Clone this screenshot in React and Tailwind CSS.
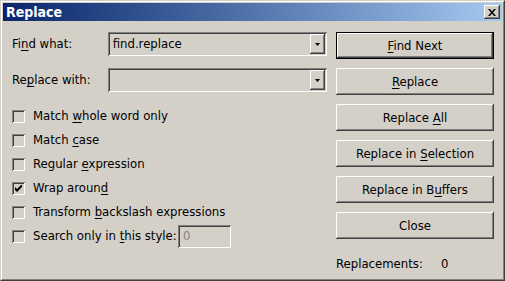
import React from 'react'

const font = { fontFamily: '"DejaVu Sans Condensed", "DejaVu Sans", sans-serif' }

const raised =
  'bg-[#d4d0c8] shadow-[inset_-1px_-1px_#404040,inset_1px_1px_#ffffff,inset_-2px_-2px_#808080,inset_2px_2px_#d4d0c8]'
const sunken =
  'shadow-[inset_1px_1px_#808080,inset_-1px_-1px_#ffffff,inset_2px_2px_#404040,inset_-2px_-2px_#d4d0c8]'

function Key({ text, at, className = '' }) {
  // underline the mnemonic letter
  return (
    <span className={className}>
      {text.slice(0, at)}
      <span className="underline underline-offset-2">{text[at]}</span>
      {text.slice(at + 1)}
    </span>
  )
}

function Combo({ value }) {
  return (
    <div className={`flex h-[24px] w-[220px] items-center justify-between pl-[5px] pr-[2px] ${sunken}`}>
      <span>{value}</span>
      <div className={`flex h-[20px] w-[15px] items-center justify-center ${raised}`}>
        <svg width="5" height="3" viewBox="0 0 5 3">
          <path d="M0 0h5L2.5 3z" fill="#000" />
        </svg>
      </div>
    </div>
  )
}

function Check({ checked, children }) {
  return (
    <div className="flex h-[24px] items-center gap-[8px]">
      <div className={`flex h-[13px] w-[13px] items-center justify-center ${sunken}`}>
        {checked && (
          <svg width="7" height="7" viewBox="0 0 7 7">
            <path d="M0 2v3l2 2 5-5V-1L2 4z" fill="#000" />
          </svg>
        )}
      </div>
      {children}
    </div>
  )
}

function Button({ children, primary }) {
  if (primary) {
    return (
      <div className="h-[27px] w-[158px] border border-black">
        <div className={`flex h-full w-full items-center justify-center ${raised}`}>{children}</div>
      </div>
    )
  }
  return (
    <div className={`flex h-[27px] w-[158px] items-center justify-center ${raised}`}>{children}</div>
  )
}

export default function App() {
  return (
    <div
      className="h-[281px] w-[505px] border border-t-[#d4d0c8] border-l-[#d4d0c8] border-r-[#404040] border-b-[#404040] bg-[#d4d0c8] text-[13px] text-black"
      style={font}
    >
      <div className="flex h-full flex-col border border-t-white border-l-white border-r-[#808080] border-b-[#808080] p-px">
        <div className="flex h-[18px] items-center justify-between bg-gradient-to-r from-[#0a246a] to-[#a6caf0] pl-[3px] pr-[2px]">
          <span className="text-[14px] font-bold text-white">Replace</span>
          <div className={`flex h-[14px] w-[16px] items-center justify-center ${raised}`}>
            <svg width="8" height="7" viewBox="0 0 8 7">
              <path d="M0 0h2l2 2.5L6 0h2L5 3.5 8 7H6L4 4.5 2 7H0l3-3.5z" fill="#000" />
            </svg>
          </div>
        </div>

        <div className="flex flex-1 gap-[9px] pl-[9px] pr-[8px] pt-[11px]">
          <div className="flex w-[315px] flex-col">
            <div className="flex h-[24px] items-center">
              <span className="w-[96px]">
                Fi<span className="underline underline-offset-2">n</span>d what:
              </span>
              <Combo value="find.replace" />
            </div>
            <div className="mt-[12px] flex h-[24px] items-center">
              <span className="w-[96px]">
                Re<span className="underline underline-offset-2">p</span>lace with:
              </span>
              <Combo value="" />
            </div>
            <div className="mt-[12px] flex flex-col">
              <Check><Key text="Match whole word only" at={6} /></Check>
              <Check><Key text="Match case" at={6} /></Check>
              <Check><Key text="Regular expression" at={8} /></Check>
              <Check checked><Key text="Wrap around" at={10} /></Check>
              <Check><Key text="Transform backslash expressions" at={10} /></Check>
              <div className="flex h-[24px] items-center">
                <div className={`mr-[8px] h-[13px] w-[13px] ${sunken}`} />
                <Key text="Search only in this style:" at={15} className="w-[145px]" />
                <div className={`flex h-[23px] w-[53px] items-center pl-[5px] text-[#808080] ${sunken}`}>0</div>
              </div>
            </div>
          </div>

          <div className="flex w-[158px] flex-col gap-[9px]">
            <Button primary><Key text="Find Next" at={0} /></Button>
            <Button><Key text="Replace" at={0} /></Button>
            <Button><Key text="Replace All" at={8} /></Button>
            <Button><Key text="Replace in Selection" at={11} /></Button>
            <Button><Key text="Replace in Buffers" at={12} /></Button>
            <Button>Close</Button>
            <div className="mt-[6px] flex">
              <span className="w-[105px]">Replacements:</span>
              <span>0</span>
            </div>
          </div>
        </div>
      </div>
    </div>
  )
}
